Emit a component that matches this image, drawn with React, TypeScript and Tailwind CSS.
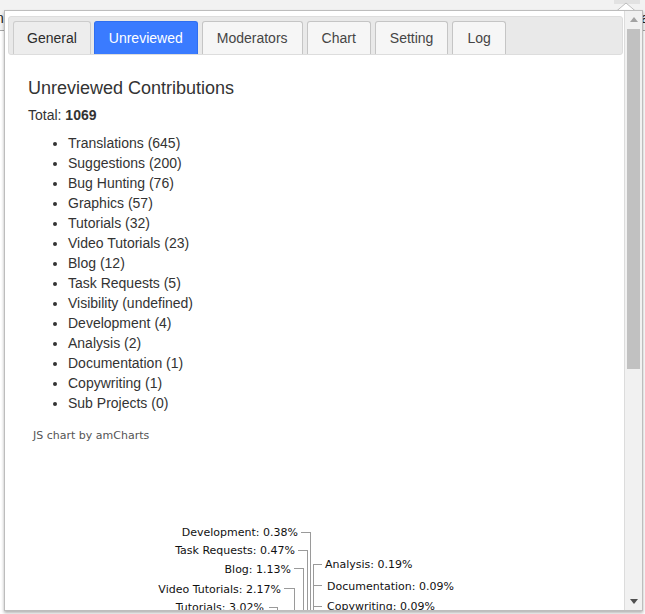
import React from "react";

const items = [
  "Translations (645)",
  "Suggestions (200)",
  "Bug Hunting (76)",
  "Graphics (57)",
  "Tutorials (32)",
  "Video Tutorials (23)",
  "Blog (12)",
  "Task Requests (5)",
  "Visibility (undefined)",
  "Development (4)",
  "Analysis (2)",
  "Documentation (1)",
  "Copywriting (1)",
  "Sub Projects (0)",
];

const tabs = ["General", "Unreviewed", "Moderators", "Chart", "Setting", "Log"];

function Tab({ label, i }: { label: string; i: number }) {
  if (i === 1) {
    return (
      <div className="h-[33px] flex items-center px-[14px] border border-b-0 border-[#2f6ef0] bg-[#3a7bff] text-white rounded-t-[3px]">
        {label}
      </div>
    );
  }
  if (i === 0) {
    return (
      <div className="h-[33px] flex items-center px-[13px] border border-b-0 border-[#cccccc] bg-[#ededed] text-[#2b2b2b] rounded-t-[3px]">
        {label}
      </div>
    );
  }
  return (
    <div className="h-[33px] flex items-center px-[14px] ml-[1px] border border-b-0 border-[#c5c5c5] bg-[#f6f6f6] text-[#454545] rounded-t-[3px]">
      {label}
    </div>
  );
}

export default function App() {
  return (
    <div className="relative w-[645px] h-[614px] overflow-hidden bg-white font-['Liberation_Sans',Arial,sans-serif]">
      <div className="relative h-[31px] bg-[#f2f2f2] border-b border-[#a8a8a8]">
        <span className="absolute left-[-4px] top-[8px] text-[14px] text-[#222]">n</span>
        <span className="absolute right-[-4px] top-[8px] text-[14px] text-[#222]">a</span>
        <div className="absolute left-[614px] top-0 w-[26px] h-[4px] bg-[#e2e2e2]" />
      </div>

      <svg className="absolute left-[616px] top-[2px]" width="22" height="10" viewBox="0 0 22 10">
        <polygon points="0,9.5 10,1 20,9.5" fill="#ffffff" stroke="#bdbdbd" strokeWidth="1" />
      </svg>

      <div className="absolute left-[4px] top-[10px] w-[639px] h-[601px] border border-[#bdbdbd] bg-white shadow-[0_2px_3px_rgba(0,0,0,0.3)] flex">
        <div className="flex-1 min-w-0 overflow-hidden pl-[3px] pr-[1px] pt-[5px]">
          <div className="flex items-end gap-[3px] h-[39px] bg-[#e9e9e9] border border-[#dddddd] rounded-[3px] pl-[4px] pt-[4px] text-[14px] leading-[17px]">
            {tabs.map((t, i) => (
              <Tab key={t} label={t} i={i} />
            ))}
          </div>

          <div className="pl-[20px] text-[#333333]">
            <h2 className="mt-[22px] text-[18px] leading-[22px] font-normal">Unreviewed Contributions</h2>
            <div className="mt-[6px] text-[14px] leading-[20px]">
              Total: <b>1069</b>
            </div>
            <ul className="mt-[8px] pl-[40px] list-disc text-[14px] leading-[20px]">
              {items.map((it) => (
                <li key={it}>{it}</li>
              ))}
            </ul>
            <div className="mt-[16px] ml-[5px] text-[11px] leading-[14px] text-[#555] font-['DejaVu_Sans',Verdana,sans-serif]">
              JS chart by amCharts
            </div>
            <svg width="590" height="200" className="block" style={{ fontFamily: "'DejaVu Sans', Verdana, sans-serif" }}>
              <g stroke="#9a9a9a" strokeWidth="1" fill="none" shapeRendering="crispEdges">
                <path d="M273,89.5 H282.5 V200" />
                <path d="M270,107.5 H279.5 V200" />
                <path d="M266,125.5 H275.5 V200" />
                <path d="M256,145.5 H266.5 V200" />
                <path d="M241,164.5 H249.5 V200" />
                <path d="M285.5,121 V200" />
                <path d="M285.5,121.5 H294" />
                <path d="M285.5,142.5 H294" />
                <path d="M285.5,163.5 H294" />
              </g>
              <g fontSize="11" fill="#111">
                <text x="270" y="93" textAnchor="end">Development: 0.38%</text>
                <text x="267" y="111" textAnchor="end">Task Requests: 0.47%</text>
                <text x="263" y="130" textAnchor="end">Blog: 1.13%</text>
                <text x="253" y="150" textAnchor="end">Video Tutorials: 2.17%</text>
                <text x="236" y="168" textAnchor="end">Tutorials: 3.02%</text>
                <text x="297" y="125">Analysis: 0.19%</text>
                <text x="299" y="147">Documentation: 0.09%</text>
                <text x="299" y="167">Copywriting: 0.09%</text>
              </g>
            </svg>
          </div>
        </div>

        <div className="w-[18px] shrink-0 flex flex-col bg-[#f1f1f1] border-l border-[#dcdcdc]">
          <div className="h-[17px] flex items-center justify-center">
            <svg width="8" height="5" viewBox="0 0 8 5">
              <polygon points="0,5 4,0 8,5" fill="#a3a3a3" />
            </svg>
          </div>
          <div className="mx-[2px] mt-[1px] h-[340px] bg-[#c1c1c1]" />
          <div className="flex-1" />
          <div className="h-[17px] flex items-center justify-center">
            <svg width="8" height="5" viewBox="0 0 8 5">
              <polygon points="0,0 8,0 4,5" fill="#505050" />
            </svg>
          </div>
        </div>
      </div>
    </div>
  );
}
